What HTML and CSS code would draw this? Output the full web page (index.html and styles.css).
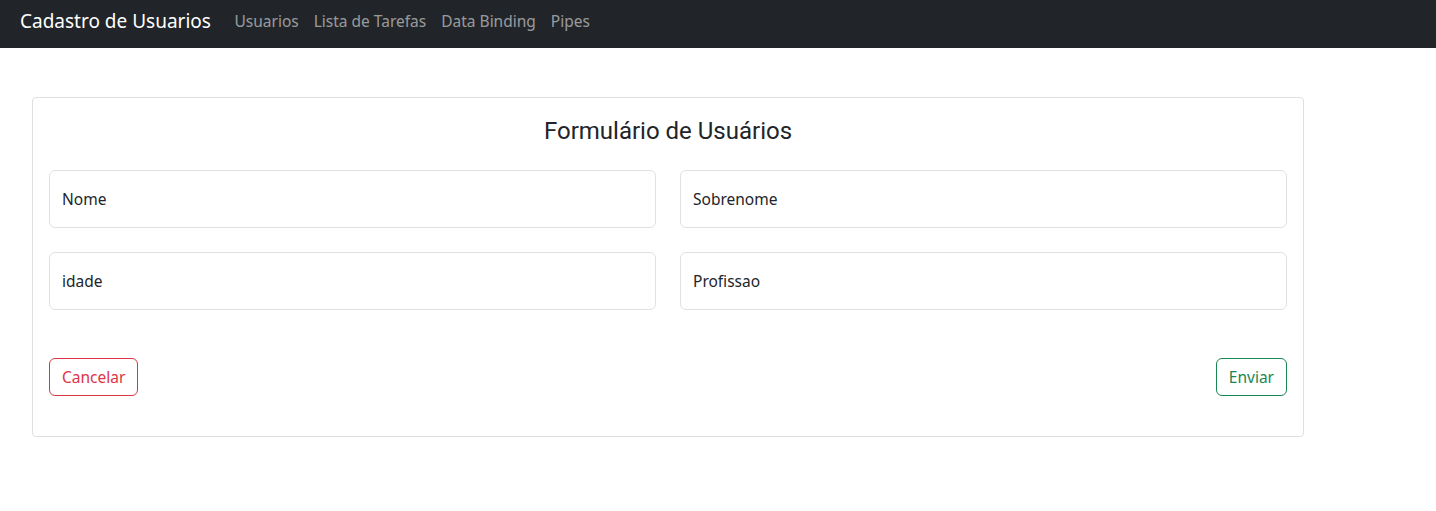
FILE: index.html
```html
<!DOCTYPE html>
<html lang="pt">
<head>
<meta charset="utf-8">
<title>Cadastro de Usuarios</title>
<link rel="stylesheet" href="styles.css">
</head>
<body>
<nav class="navbar">
  <a class="brand" href="#">Cadastro de Usuarios</a>
  <ul class="nav-links">
    <li><a href="#">Usuarios</a></li>
    <li><a href="#">Lista de Tarefas</a></li>
    <li><a href="#">Data Binding</a></li>
    <li><a href="#">Pipes</a></li>
  </ul>
</nav>
<main class="page">
  <form class="card">
    <h2 class="card-title">Formulário de Usuários</h2>
    <div class="grid">
      <div class="field">Nome</div>
      <div class="field">Sobrenome</div>
      <div class="field">idade</div>
      <div class="field">Profissao</div>
    </div>
    <div class="actions">
      <button type="button" class="btn btn-danger">Cancelar</button>
      <button type="submit" class="btn btn-success">Enviar</button>
    </div>
  </form>
</main>
</body>
</html>
```
FILE: styles.css
```css
* { box-sizing: border-box; }
body {
  margin: 0;
  font-family: "Noto Sans", "Open Sans", sans-serif;
  font-size: 15.5px;
  color: #212529;
  background: #fff;
}
.navbar {
  height: 48px;
  background: #212529;
  display: flex;
  align-items: center;
  padding: 0 20px 6px;
}
.brand {
  color: #fff;
  text-decoration: none;
  font-size: 19px;
  margin-right: 16px;
}
.nav-links {
  list-style: none;
  margin: 0;
  padding: 0;
  display: flex;
}
.nav-links a {
  display: block;
  padding: 0 7.5px;
  color: rgba(255, 255, 255, 0.55);
  text-decoration: none;
  font-size: 15.5px;
}
.page {
  padding: 49px 0 0 32px;
}
.card {
  width: 1272px;
  border: 1px solid #dfdfdf;
  border-radius: 4px;
  padding: 16px 16px 40px;
}
.card-title {
  margin: 2px 0 24px;
  text-align: center;
  font-family: Roboto, sans-serif;
  font-weight: 400;
  font-size: 24px;
  line-height: 30px;
}
.grid {
  display: grid;
  grid-template-columns: 1fr 1fr;
  column-gap: 24px;
  row-gap: 24px;
}
.field {
  height: 58px;
  border: 1px solid #dee2e6;
  border-radius: 6px;
  padding: 0 12px;
  display: flex;
  align-items: center;
}
.actions {
  display: flex;
  justify-content: space-between;
  margin-top: 48px;
}
.btn {
  height: 38px;
  padding: 0 12px;
  font-family: inherit;
  font-size: 15.5px;
  background: #fff;
  border-radius: 6px;
  border: 1px solid;
}
.btn-danger { color: #dc3545; border-color: #dc3545; }
.btn-success { color: #198754; border-color: #198754; }
```
